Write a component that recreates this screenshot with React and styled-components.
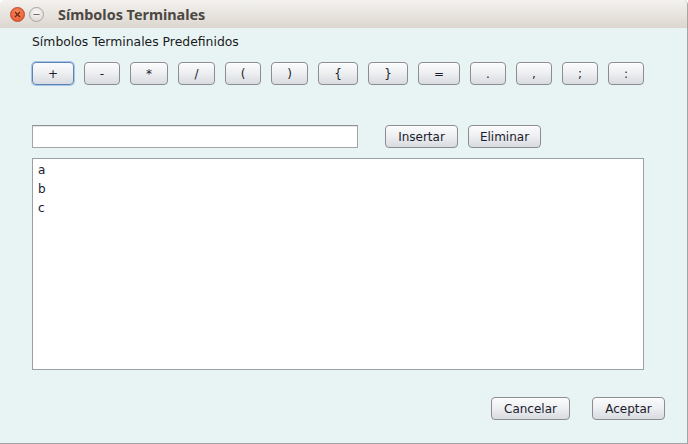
import React from "react";
import styled, { createGlobalStyle } from "styled-components";

const GlobalStyle = createGlobalStyle`
  html, body {
    margin: 0;
    padding: 0;
    background: #ffffff;
  }
  * {
    box-sizing: border-box;
  }
`;

const Window = styled.div`
  width: 688px;
  height: 444px;
  display: flex;
  flex-direction: column;
  background: #e8f4f4;
  border-right: 1px solid #a3a5a5;
  border-bottom: 1px solid #a3a5a5;
  border-top-left-radius: 5px;
  border-top-right-radius: 5px;
  overflow: hidden;
  font-family: "DejaVu Sans", "Liberation Sans", sans-serif;
`;

const TitleBar = styled.div`
  height: 28px;
  flex: none;
  display: flex;
  align-items: center;
  padding-left: 10px;
  background: linear-gradient(#f4f2ef, #dcd6cf);
`;

const Dot = styled.span`
  width: 15px;
  height: 15px;
  border-radius: 50%;
  margin-right: 4px;
  display: flex;
  align-items: center;
  justify-content: center;
  background: ${(p) =>
    p.close
      ? "radial-gradient(circle at 50% 35%, #f98a5c, #e3522a)"
      : "radial-gradient(circle at 50% 35%, #fbfaf9, #d6d2cd)"};
  border: 1px solid ${(p) => (p.close ? "#b9482a" : "#aaa59f")};
`;

const Title = styled.span`
  margin-left: 10px;
  font-family: "Noto Sans", "DejaVu Sans", sans-serif;
  font-weight: 700;
  font-size: 14.4px;
  color: #4b4843;
`;

const Content = styled.div`
  flex: 1;
  display: flex;
  flex-direction: column;
  padding: 6px 0 0 32px;
`;

const Label = styled.div`
  font-size: 12.4px;
  color: #1a1a1a;
  height: 16px;
  line-height: 16px;
`;

const SymbolRow = styled.div`
  display: flex;
  gap: 10px;
  margin-top: 12px;
`;

const Btn = styled.button`
  width: ${(p) => p.w}px;
  height: 23px;
  padding: 0;
  font-family: "DejaVu Sans", sans-serif;
  font-size: 12px;
  color: #1c1c2e;
  background: linear-gradient(#fbfbfc 0%, #eef0f2 45%, #d8dbe0 100%);
  border: 1px solid ${(p) => (p.focus ? "#5d84b8" : "#8b8d90")};
  border-radius: 4px;
  box-shadow: ${(p) =>
    p.focus ? "0 0 0 1px #a9c4e6" : "inset 0 1px 0 #ffffff"};
  display: flex;
  align-items: center;
  justify-content: center;
`;

const InputRow = styled.div`
  display: flex;
  align-items: center;
  margin-top: 40px;
`;

const Field = styled.div`
  width: 326px;
  height: 23px;
  background: #ffffff;
  border: 1px solid #a2a5a7;
  border-top-color: #8e9193;
  box-shadow: inset 0 1px 0 #e6e6e6;
  margin-right: 27px;
`;

const ActionGroup = styled.div`
  display: flex;
  gap: 10px;
`;

const ListBox = styled.div`
  width: 612px;
  height: 212px;
  margin-top: 10px;
  background: #ffffff;
  border: 1px solid #9aa0a4;
  padding: 2px 0 0 5px;
`;

const ListItem = styled.div`
  font-size: 12px;
  color: #1a1a33;
  height: 19px;
  line-height: 19px;
`;

const Footer = styled.div`
  display: flex;
  justify-content: flex-end;
  gap: 22px;
  padding-right: 22px;
  margin-top: 27px;
`;

const symbols = [
  ["+", 42],
  ["-", 36],
  ["*", 38],
  ["/", 37],
  ["(", 36],
  [")", 37],
  ["{", 40],
  ["}", 40],
  ["=", 42],
  [".", 36],
  [",", 36],
  [";", 36],
  [":", 36],
];

export default function App() {
  return (
    <>
      <GlobalStyle />
      <Window>
        <TitleBar>
          <Dot close>
            <svg width="7" height="7" viewBox="0 0 7 7">
              <path d="M1 1L6 6M6 1L1 6" stroke="#6b2412" strokeWidth="1.3" />
            </svg>
          </Dot>
          <Dot>
            <svg width="7" height="7" viewBox="0 0 7 7">
              <path d="M0.5 3.5H6.5" stroke="#6e6a65" strokeWidth="1.2" />
            </svg>
          </Dot>
          <Title>Símbolos Terminales</Title>
        </TitleBar>
        <Content>
          <Label>Símbolos Terminales Predefinidos</Label>
          <SymbolRow>
            {symbols.map(([s, w], i) => (
              <Btn key={i} w={w} focus={i === 0}>
                {s}
              </Btn>
            ))}
          </SymbolRow>
          <InputRow>
            <Field />
            <ActionGroup>
              <Btn w={73}>Insertar</Btn>
              <Btn w={73}>Eliminar</Btn>
            </ActionGroup>
          </InputRow>
          <ListBox>
            <ListItem>a</ListItem>
            <ListItem>b</ListItem>
            <ListItem>c</ListItem>
          </ListBox>
          <Footer>
            <Btn w={79}>Cancelar</Btn>
            <Btn w={73}>Aceptar</Btn>
          </Footer>
        </Content>
      </Window>
    </>
  );
}
